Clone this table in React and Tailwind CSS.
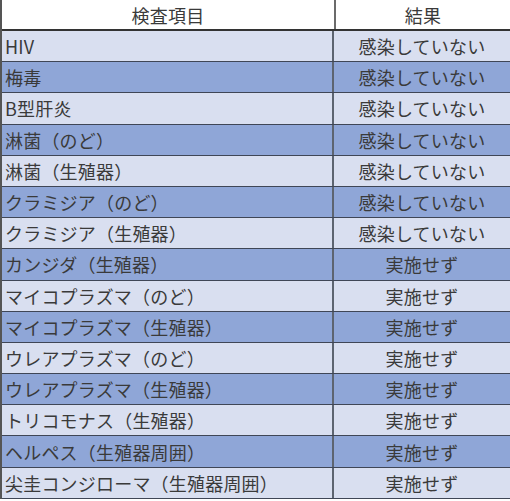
import React from "react";

const rows = [
  { name: "HIV", result: "感染していない" },
  { name: "梅毒", result: "感染していない" },
  { name: "B型肝炎", result: "感染していない" },
  { name: "淋菌（のど）", result: "感染していない" },
  { name: "淋菌（生殖器）", result: "感染していない" },
  { name: "クラミジア（のど）", result: "感染していない" },
  { name: "クラミジア（生殖器）", result: "感染していない" },
  { name: "カンジダ（生殖器）", result: "実施せず" },
  { name: "マイコプラズマ（のど）", result: "実施せず" },
  { name: "マイコプラズマ（生殖器）", result: "実施せず" },
  { name: "ウレアプラズマ（のど）", result: "実施せず" },
  { name: "ウレアプラズマ（生殖器）", result: "実施せず" },
  { name: "トリコモナス（生殖器）", result: "実施せず" },
  { name: "ヘルペス（生殖器周囲）", result: "実施せず" },
  { name: "尖圭コンジローマ（生殖器周囲）", result: "実施せず" },
];

const App = () => {
  return (
    <div
      className="w-[510px] h-[501px] bg-white text-[#3a3a3a] text-[18px] leading-none tracking-[0.2px] overflow-hidden"
      style={{ fontFamily: '"Noto Sans CJK JP", "Noto Sans", sans-serif' }}
    >
      <div className="border-l-2 border-[#555]">
        {/* header */}
        <div className="flex h-[31px] border-b-2 border-[#333] bg-white">
          <div className="w-[332px] flex items-center justify-center">検査項目</div>
          <div className="w-[2px] bg-[#6b6b6b]" />
          <div className="flex-1 flex items-center justify-center">結果</div>
        </div>

        {rows.map((row, idx) => (
          <div
            key={row.name}
            className={
              "flex h-[31.2px] border-b border-[#3f4656] " +
              (idx % 2 === 0 ? "bg-[#d9dff0]" : "bg-[#8fa6d7]")
            }
          >
            <div className="w-[330px] flex items-center pl-[3px] whitespace-nowrap">
              {row.name}
            </div>
            <div className="w-[2px] bg-[#5d6470]" />
            <div className="flex-1 flex items-center justify-center whitespace-nowrap">
              {row.result}
            </div>
          </div>
        ))}
      </div>
    </div>
  );
};

export default App;
